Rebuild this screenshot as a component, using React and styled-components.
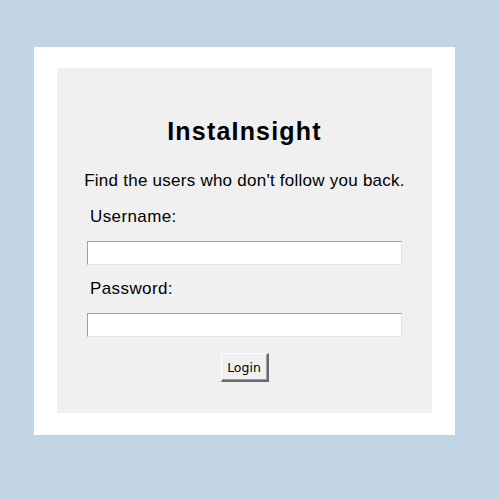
import React from 'react'
import styled, { createGlobalStyle } from 'styled-components'

const GlobalStyle = createGlobalStyle`
  html, body {
    margin: 0;
    padding: 0;
    background: #c1d5e5;
    font-family: "Liberation Sans", Arial, sans-serif;
  }
`

const Page = styled.div`
  width: 500px;
  height: 500px;
  padding: 47px 0 0 34px;
  box-sizing: border-box;
`

const Frame = styled.div`
  width: 421px;
  height: 388px;
  background: #fff;
  padding: 21px 23px 22px 23px;
  box-sizing: border-box;
`

const Panel = styled.div`
  width: 375px;
  height: 345px;
  background: #f0f0f0;
  display: flex;
  flex-direction: column;
  align-items: center;
  padding-top: 49px;
  box-sizing: border-box;
`

const Title = styled.h1`
  margin: 0;
  font-size: 25px;
  font-weight: bold;
  letter-spacing: 1.2px;
  color: #000;
  line-height: 28px;
`

const Subtitle = styled.p`
  margin: 26px 0 0;
  font-size: 17px;
  letter-spacing: 0.25px;
  line-height: 20px;
  color: #000;
`

const Field = styled.div`
  width: 315px;
  display: flex;
  flex-direction: column;
  margin-top: ${p => p.$top}px;
`

const Label = styled.label`
  font-size: 17px;
  letter-spacing: 0.4px;
  line-height: 20px;
  padding-left: 3px;
  color: #000;
`

const Input = styled.input`
  margin-top: 14px;
  height: 24px;
  width: 315px;
  box-sizing: border-box;
  background: #fff;
  border-style: solid;
  border-width: 1px;
  border-color: #a0a0a0 #e3e3e3 #e3e3e3 #a0a0a0;
  outline: none;
  padding: 0 3px;
`

const Button = styled.button`
  margin-top: 16px;
  width: 48px;
  height: 29px;
  font-family: "DejaVu Sans", Tahoma, sans-serif;
  font-size: 12.5px;
  background: #f0f0f0;
  color: #000;
  border-style: solid;
  border-width: 1px 2px 2px 1px;
  border-color: #fff #6a6a6a #6a6a6a #fff;
  box-shadow: inset -1px -1px 0 #a0a0a0;
  padding: 0;
  cursor: pointer;
`

export default function App() {
  return (
    <>
      <GlobalStyle />
      <Page>
        <Frame>
          <Panel>
            <Title>InstaInsight</Title>
            <Subtitle>Find the users who don't follow you back.</Subtitle>
            <Field $top={16}>
              <Label>Username:</Label>
              <Input type="text" />
            </Field>
            <Field $top={14}>
              <Label>Password:</Label>
              <Input type="password" />
            </Field>
            <Button>Login</Button>
          </Panel>
        </Frame>
      </Page>
    </>
  )
}
